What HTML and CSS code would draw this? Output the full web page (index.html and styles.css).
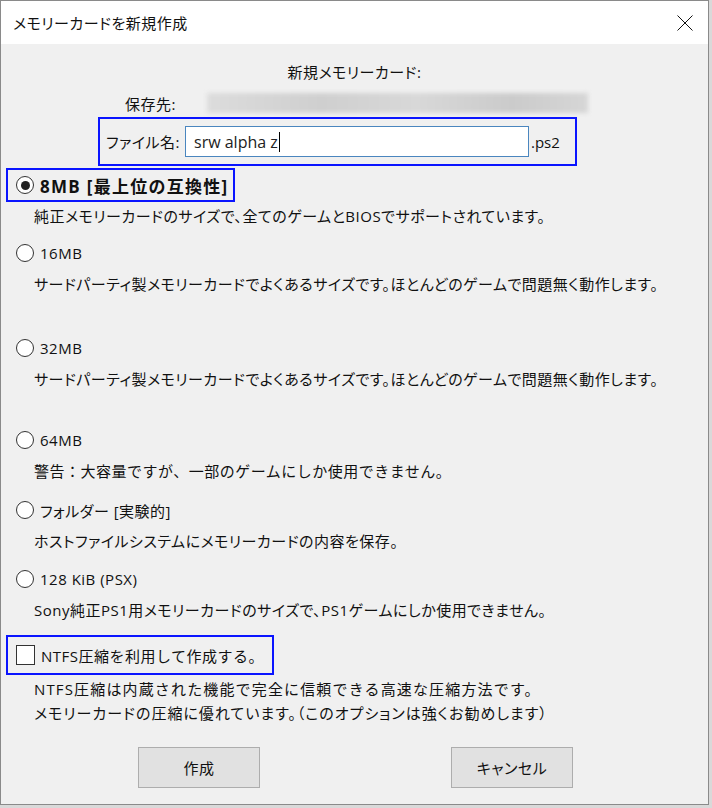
FILE: index.html
```html
<!doctype html>
<html lang="ja">
  <head>
    <meta charset="UTF-8" />
    <meta name="viewport" content="width=device-width, initial-scale=1.0" />
    <title>メモリーカードを新規作成</title>
    <link rel="stylesheet" href="styles.css">
  </head>
  <body>
    <div class="window">
      <div class="titlebar">
        <span class="title">メモリーカードを新規作成</span>
        <span class="close">
          <svg width="16" height="16" viewBox="0 0 16 16">
            <path d="M0.5 0.5 L15.5 15.5 M15.5 0.5 L0.5 15.5" stroke="#111" stroke-width="1" fill="none" />
          </svg>
        </span>
      </div>

      <div class="content">
        <div class="heading">新規メモリーカード:</div>

        <div class="dest-row">
          <span class="dest-label">保存先:</span>
          <div class="dest-path"></div>
        </div>

        <div class="name-row mark">
          <span class="name-label">ファイル名:</span>
          <div class="name-input">srw alpha z<span class="caret"></span></div>
          <span class="ext">.ps2</span>
        </div>

        <div class="option">
          <div class="choice mark bold"><span class="radio checked"></span>8MB [最上位の互換性]</div>
          <p class="desc">純正メモリーカードのサイズで、全てのゲームとBIOSでサポートされています。</p>
        </div>

        <div class="option gap-16">
          <div class="choice"><span class="radio"></span>16MB</div>
          <p class="desc">サードパーティ製メモリーカードでよくあるサイズです。ほとんどのゲームで問題無く動作します。</p>
        </div>

        <div class="option gap-32">
          <div class="choice"><span class="radio"></span>32MB</div>
          <p class="desc">サードパーティ製メモリーカードでよくあるサイズです。ほとんどのゲームで問題無く動作します。</p>
        </div>

        <div class="option gap-64">
          <div class="choice"><span class="radio"></span>64MB</div>
          <p class="desc full">警告：大容量ですが、一部のゲームにしか使用できません。</p>
        </div>

        <div class="option gap-folder">
          <div class="choice"><span class="radio"></span>フォルダー [実験的]</div>
          <p class="desc">ホストファイルシステムにメモリーカードの内容を保存。</p>
        </div>

        <div class="option gap-psx">
          <div class="choice"><span class="radio"></span>128 KiB (PSX)</div>
          <p class="desc">Sony純正PS1用メモリーカードのサイズで、PS1ゲームにしか使用できません。</p>
        </div>

        <div class="check-row mark full"><span class="checkbox"></span>NTFS圧縮を利用して作成する。</div>
        <p class="note">
          <span class="full">NTFS圧縮は内蔵された機能で完全に信頼できる高速な圧縮方法です。</span><br>
          メモリーカードの圧縮に優れています。（このオプションは強くお勧めします）
        </p>

        <div class="buttons">
          <button class="btn">作成</button>
          <button class="btn">キャンセル</button>
        </div>
      </div>
    </div>
  </body>
</html>
```

FILE: styles.css
```css
body {
  margin: 0;
  background: #d9d9d9;
  font-family: 'Open Sans', 'Noto Sans CJK JP', sans-serif;
  font-size: 15px;
  letter-spacing: 0.5px;
  color: #111;
  font-feature-settings: 'palt';
}

.window {
  width: 707px;
  height: 803px;
  background: #f0f0f0;
  border: 1px solid #8a8a8a;
  display: flex;
  flex-direction: column;
}

.titlebar {
  height: 43px;
  background: white;
  display: flex;
  align-items: center;
  justify-content: space-between;
  padding: 0 15px 0 12px;
}

.title {
  font-size: 15px;
}

.close {
  display: flex;
}

.content {
  padding: 0 5px;
  display: flex;
  flex-direction: column;
}

.heading {
  margin-top: 16px;
  line-height: 24px;
  text-align: center;
}

.dest-row {
  height: 28px;
  margin-top: 5px;
  display: flex;
  align-items: center;
  padding-left: 119px;
}

.dest-label {
  width: 82px;
}

.dest-path {
  width: 381px;
  height: 20px;
  background: linear-gradient(90deg, #dcdcdc, #cfcfcf 30%, #d8d8d8 55%, #cbcbcb 80%, #d6d6d6);
  filter: blur(2px);
}

.mark {
  border: 2px solid #0a14ff;
}

.full {
  font-feature-settings: normal;
}

.name-row {
  align-self: flex-start;
  margin-left: 92px;
  height: 45px;
  width: 469px;
  display: flex;
  align-items: center;
  padding-left: 6px;
}

.name-label {
  width: 79px;
}

.name-input {
  width: 334px;
  height: 29px;
  background: white;
  border: 1px solid #4a86bf;
  padding-left: 8px;
  display: flex;
  align-items: center;
  font-size: 16px;
  letter-spacing: 0;
  color: #222;
}

.caret {
  width: 1px;
  height: 20px;
  background: #000;
  margin-left: 1px;
}

.ext {
  margin-left: 2px;
  letter-spacing: 0;
}

.option {
  display: flex;
  flex-direction: column;
  margin-top: 2px;
}

.gap-16 { margin-top: 6px; }
.gap-32 { margin-top: 33px; }
.gap-64 { margin-top: 30px; }
.gap-folder { margin-top: 8px; }
.gap-psx { margin-top: 7px; }

.choice {
  align-self: flex-start;
  height: 30px;
  display: flex;
  align-items: center;
  border: 2px solid transparent;
  padding: 0 4px 0 8px;
}

.choice.mark {
  border-color: #0a14ff;
}

.bold {
  font-weight: bold;
  font-size: 17px;
  letter-spacing: 1.3px;
}

.radio {
  width: 16px;
  height: 16px;
  border: 1px solid #333;
  border-radius: 50%;
  background: white;
  margin-right: 6px;
  display: flex;
  align-items: center;
  justify-content: center;
}

.radio.checked::after {
  content: '';
  width: 9px;
  height: 9px;
  border-radius: 50%;
  background: #222;
}

.desc {
  margin: 0 0 0 28px;
  line-height: 28px;
  height: 28px;
}

.check-row {
  align-self: flex-start;
  margin-top: 11px;
  height: 36px;
  display: flex;
  align-items: center;
  padding: 0 8px;
}

.checkbox {
  width: 17px;
  height: 18px;
  border: 1px solid #333;
  background: white;
  margin-right: 6px;
}

.note {
  margin: 2px 0 0 28px;
  line-height: 24px;
  letter-spacing: 1px;
}

.note .full {
  letter-spacing: 1.15px;
}

.buttons {
  margin-top: 22px;
  display: flex;
  justify-content: center;
  gap: 191px;
  padding-left: 2px;
}

.btn {
  width: 122px;
  height: 41px;
  background: #e1e1e1;
  border: 1px solid #adadad;
  font-family: inherit;
  font-size: 15px;
  letter-spacing: 0.5px;
  color: #111;
  font-feature-settings: 'palt';
}
```
